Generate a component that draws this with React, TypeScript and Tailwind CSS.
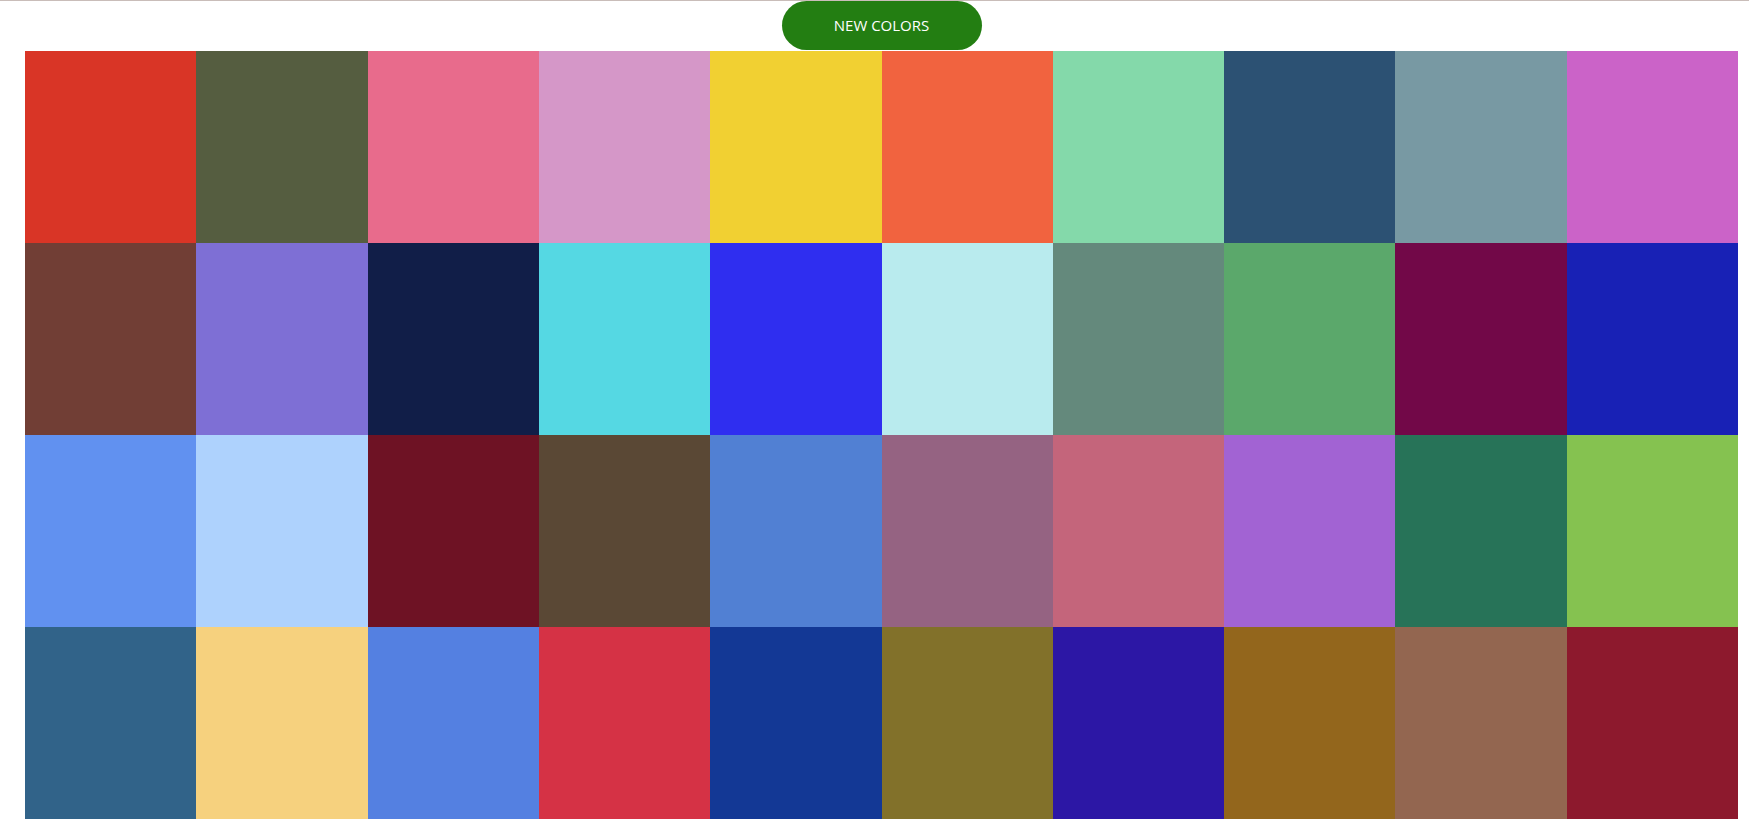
import React, { useState } from "react";

//    ====== Color grid ======

const INITIAL_COLORS: string[] = [
  "#d93526", "#555d40", "#e86b8c", "#d597c8", "#f1d032",
  "#f1633f", "#84d9aa", "#2c5173", "#7899a3", "#cb63c8",
  "#713e35", "#7e6fd5", "#111e48", "#55d8e3", "#2f2ef0",
  "#b9ebee", "#64897c", "#5ba86b", "#720848", "#1821b5",
  "#6191f0", "#aed2fd", "#6e1224", "#5a4835", "#5180d3",
  "#956382", "#c4657b", "#a263d3", "#277358", "#85c250",
  "#316389", "#f6d17e", "#5480e1", "#d53245", "#133895",
  "#82712a", "#2c17a5", "#93661c", "#936650", "#8d192d",
];

// Random hex
const randomColor = () =>
  "#" +
  Math.floor(Math.random() * 0xffffff)
    .toString(16)
    .padStart(6, "0");

const App: React.FC = () => {
  const [colors, setColors] = useState<string[]>(INITIAL_COLORS);

  const handleNewColors = () => {
    setColors((prev) => prev.map(() => randomColor()));
  };

  return (
    <div className="min-h-screen bg-white border-t border-[#c9bdb9] font-['Open_Sans',_'Noto_Sans',_sans-serif]">
      <div className="ml-[25px] w-[1713px] flex flex-col items-center">
        {/* Button */}
        <button
          onClick={handleNewColors}
          className="w-[200px] h-[49px] rounded-full bg-[#237e12] text-white text-[15px] flex items-center justify-center cursor-pointer"
        >
          NEW COLORS
        </button>
        {/* Grid */}
        <div className="grid grid-cols-10 w-full mt-px">
          {colors.map((c, i) => (
            <div key={i} className="h-[192px]" style={{ backgroundColor: c }} />
          ))}
        </div>
      </div>
    </div>
  );
};

export default App;
